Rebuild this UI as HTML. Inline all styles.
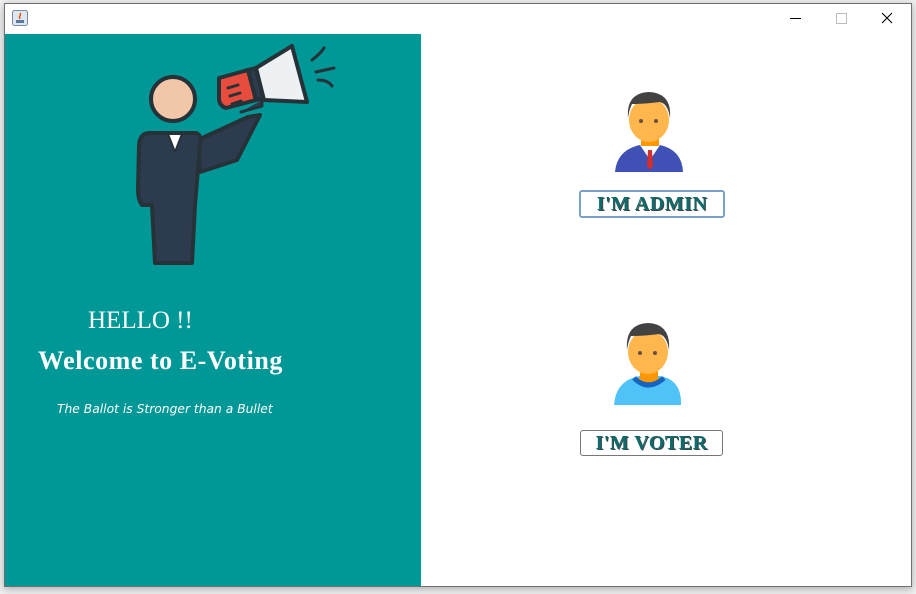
<!DOCTYPE html>
<html><head><meta charset="utf-8"><style>
body{margin:0;width:916px;height:594px;background:#f0f0f0;position:relative;overflow:hidden;font-family:"Liberation Serif",serif}
.win{position:absolute;left:4px;top:3px;width:906px;height:582px;background:#fff;border:1px solid #707070;box-shadow:0 2px 8px rgba(0,0,0,.3)}
.teal{position:absolute;left:0px;top:30px;width:416px;height:552px;background:#009797}
.t{position:absolute;color:#fff;white-space:nowrap}
.btn{position:absolute;background:#fff;border:1px solid #777;border-radius:3px;color:#0d6b6b;font-family:"Liberation Serif",serif;font-weight:bold;font-size:20px;text-align:center;line-height:24px;letter-spacing:0.5px;text-shadow:1px 1px 0 #444}
</style></head><body>
<div class="win">
 <svg style="position:absolute;left:7px;top:6px" width="17" height="17"><rect x=".5" y=".5" width="15" height="15" rx="2" fill="#dfe7f0" stroke="#7a8ca0"/><path d="M8 3c2 2-2 3 0 6" stroke="#e05a1a" fill="none" stroke-width="1.5"/><rect x="4" y="10" width="8" height="3" fill="#5a7aa0"/></svg>
 <div style="position:absolute;left:785px;top:14px;width:11px;height:1px;background:#000"></div>
 <div style="position:absolute;left:831px;top:9px;width:9px;height:9px;border:1px solid #bbb"></div>
 <svg style="position:absolute;left:876px;top:8px" width="12" height="12"><path d="M1 1L11 11M11 1L1 11" stroke="#000" stroke-width="1.1"/></svg>
 <div class="teal"></div>
</div>
<svg style="position:absolute;left:0;top:0" width="916" height="594">
 <g stroke="#263238" stroke-width="4" stroke-linejoin="round" stroke-linecap="round">
  <path d="M198 140 L248 117 L260 115 L237 160 L200 172 Z" fill="#2d3b4f"/>
  <path d="M150 133 L196 133 Q202 135 200 145 L195 205 L192 263 L155 263 L152 205 L142 205 Q138 200 138 190 L139 145 Q140 133 150 133Z" fill="#2d3b4f"/>
  <path d="M168 134 L182 134 L175 152 Z" fill="#fff" stroke-width="2"/>
  <circle cx="173" cy="99" r="22" fill="#f2c6a8"/>
  <path d="M241 112 L262 106 L262 100" fill="#2d3b4f" stroke-width="3"/>
  <path d="M219 78 L248 70 L256 100 L226 108 Q220 106 219 100Z" fill="#e74c3c"/>
  <path d="M248 70 L256 68 L264 98 L256 100Z" fill="#2d3b4f"/>
  <path d="M256 68 L292 46 L307 102 L264 100Z" fill="#eef1f3"/>
 </g>
 <g stroke="#263238" stroke-width="3" stroke-linecap="round" fill="none">
  <path d="M228 88l10-3M230 96l10-3M232 104l9-3"/>
  <path d="M312 60Q320 54 324 48M316 72L334 68M318 80Q328 80 332 86"/>
 </g>
 <path d="M615 172 Q617 150 640 145 L660 145 Q682 150 683 172Z" fill="#3f51b5"/>
 <path d="M640 145 L660 145 L650 160Z" fill="#fff"/>
 <path d="M648 150 L652 150 L653 166 L650 170 L647 166Z" fill="#d32f2f"/>
 <rect x="641" y="134" width="18" height="12" fill="#ff9800"/>
 <ellipse cx="649" cy="120" rx="20" ry="22" fill="#ffb74d"/>
 <path d="M628 118 Q626 93 649 92 Q672 93 670 118 Q668 104 660 102 Q645 104 632 104 Q629 110 628 118Z" fill="#424242"/>
 <circle cx="641" cy="121" r="2" fill="#6d4c41"/><circle cx="656" cy="121" r="2" fill="#6d4c41"/>
 <path d="M614 405 Q616 380 640 376 L660 376 Q682 380 681 405Z" fill="#4fc3f7"/>
 <path d="M634 378 Q648 392 664 378" stroke="#1565c0" stroke-width="5" fill="#ff9800"/>
 <rect x="640" y="364" width="18" height="14" fill="#ff9800"/>
 <ellipse cx="648" cy="352" rx="20" ry="22" fill="#ffb74d"/>
 <path d="M627 350 Q625 324 648 323 Q671 324 669 350 Q667 336 659 334 Q644 336 631 336 Q628 342 627 350Z" fill="#424242"/>
 <circle cx="640" cy="353" r="2" fill="#6d4c41"/><circle cx="655" cy="353" r="2" fill="#6d4c41"/>
</svg>
<div class="t" style="left:88px;top:307px;font-size:25px">HELLO !!</div>
<div class="t" style="left:38px;top:346px;font-size:26px;font-weight:bold;letter-spacing:0.55px">Welcome to E-Voting</div>
<div class="t" style="left:57px;top:402px;font-style:italic;font-family:'DejaVu Sans',sans-serif;font-size:12.3px">The Ballot is Stronger than a Bullet</div>
<div class="btn" style="left:579px;top:190px;width:142px;height:24px;border:2px solid #7aa0c8">I'M ADMIN</div>
<div class="btn" style="left:580px;top:430px;width:141px;height:24px">I'M VOTER</div>
</body></html>
